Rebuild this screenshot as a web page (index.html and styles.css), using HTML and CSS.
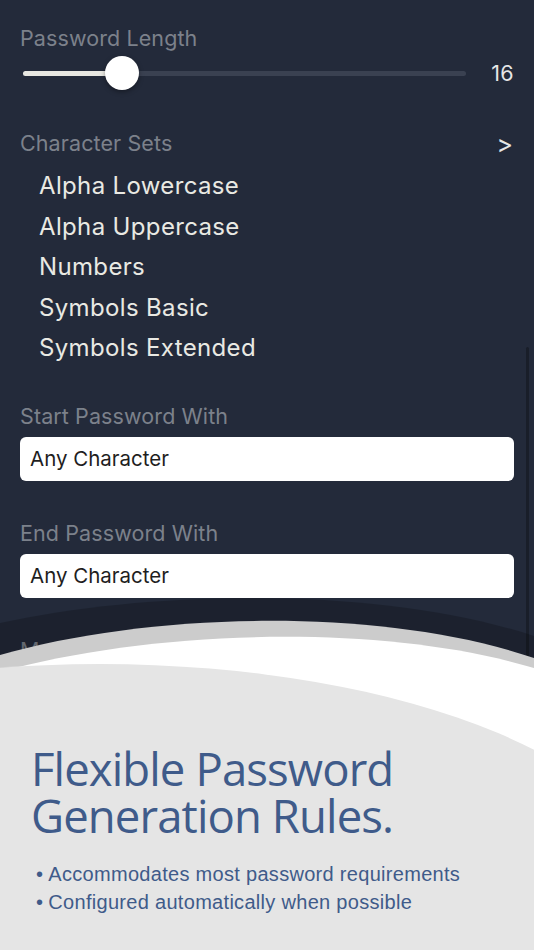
FILE: index.html
```html
<!DOCTYPE html>
<html lang="en">
<head>
<meta charset="utf-8">
<title>Password Rules</title>
<link rel="stylesheet" href="styles.css">
</head>
<body>
<div class="screen">
  <div class="app">
    <div class="label">Password Length</div>
    <div class="slider-row">
      <div class="track">
        <div class="fill" style="width:22.4%"></div>
        <div class="thumb" style="left:22.4%"></div>
      </div>
      <div class="value">16</div>
    </div>

    <div class="label-row">
      <div class="label">Character Sets</div>
      <div class="chev">&gt;</div>
    </div>
    <ul class="sets">
      <li>Alpha Lowercase</li>
      <li>Alpha Uppercase</li>
      <li>Numbers</li>
      <li>Symbols Basic</li>
      <li>Symbols Extended</li>
    </ul>

    <div class="label section-first">Start Password With</div>
    <div class="field">Any Character</div>

    <div class="label section">End Password With</div>
    <div class="field">Any Character</div>

    <div class="label section">Must Contain</div>
  </div>
  <div class="scrollbar"></div>

  <div class="promo">
    <svg class="waves" viewBox="0 590 534 360" preserveAspectRatio="none" aria-hidden="true">
      <path d="M0,623 C150,590 380,585 534,636 L534,950 L0,950 Z" fill="rgba(0,0,0,0.2)"/>
      <path d="M0,655 C150,612 380,606 534,658 L534,950 L0,950 Z" fill="#cccccc"/>
      <path d="M0,672 C150,630 380,622 534,668 L534,950 L0,950 Z" fill="#ffffff"/>
      <ellipse cx="100" cy="900" rx="563" ry="236" fill="#e5e5e5"/>
    </svg>
    <div class="promo-text">
      <h1 class="headline"><span class="hl-line">Flexible Password</span><span class="hl-line">Generation Rules.</span></h1>
      <ul class="bullets">
        <li>Accommodates most password requirements</li>
        <li>Configured automatically when possible</li>
      </ul>
    </div>
  </div>
</div>
</body>
</html>
```

FILE: styles.css
```css
* { box-sizing: border-box; }

html, body {
  margin: 0;
  padding: 0;
}

body {
  background: #232a3a;
  font-family: Inter, "Noto Sans", sans-serif;
}

.screen {
  position: relative;
  width: 534px;
  height: 950px;
  overflow: hidden;
  background: #232a3a;
}

.app {
  padding: 25px 20px 0 20px;
}

.label {
  color: #7c818b;
  font-size: 21.5px;
  line-height: 26px;
  letter-spacing: 0.1px;
}

.slider-row {
  display: flex;
  align-items: center;
  height: 34px;
  margin-top: 5px;
}

.track {
  position: relative;
  flex: 1;
  height: 5px;
  margin-left: 3px;
  border-radius: 3px;
  background: #3a4151;
}

.fill {
  height: 100%;
  border-radius: 3px;
  background: #e7e7e1;
}

.thumb {
  position: absolute;
  top: 50%;
  width: 34px;
  height: 34px;
  margin: -17px 0 0 -17px;
  border-radius: 50%;
  background: #ffffff;
  box-shadow: 0 2px 5px rgba(0, 0, 0, 0.35);
}

.value {
  margin-left: 25px;
  color: #e6e6e6;
  font-size: 21.5px;
  letter-spacing: 0.3px;
}

.label-row {
  display: flex;
  justify-content: space-between;
  align-items: baseline;
  margin-top: 39px;
}

.chev {
  color: #e6e6e6;
  font-size: 25px;
  line-height: 26px;
  padding-right: 1px;
  position: relative;
  top: 2px;
}

.sets {
  list-style: none;
  margin: 10px 0 0 0;
  padding: 0 0 0 19px;
}

.sets li {
  color: #e9e9e3;
  font-size: 24px;
  line-height: 40.5px;
  letter-spacing: 0.35px;
}

.section-first {
  margin-top: 34.5px;
}

.section {
  margin-top: 39px;
}

.field {
  height: 44px;
  margin-top: 8px;
  padding-left: 10px;
  border-radius: 6px;
  background: #ffffff;
  color: #1e1e1e;
  font-size: 20.5px;
  line-height: 44px;
  letter-spacing: 0;
}

.scrollbar {
  position: absolute;
  top: 347px;
  right: 5px;
  width: 3px;
  height: 603px;
  border-radius: 2px;
  background: #191e29;
}

.promo {
  position: absolute;
  left: 0;
  top: 590px;
  width: 534px;
  height: 360px;
}

.waves {
  position: absolute;
  left: 0;
  top: 0;
  width: 534px;
  height: 360px;
  display: block;
}

.promo-text {
  position: relative;
  padding: 155px 0 0 31px;
}

.headline {
  margin: 0;
  color: #3f5b8a;
  font-family: "Open Sans", "Noto Sans", sans-serif;
  font-weight: 400;
  font-size: 45.5px;
  line-height: 47px;
  letter-spacing: -0.9px;
}

.hl-line {
  display: block;
  height: 47px;
}

.bullets {
  list-style: none;
  margin: 22px 0 0 0;
  padding: 0 0 0 5px;
}

.bullets li {
  color: #3f5b8a;
  font-family: "Liberation Sans", Arial, sans-serif;
  font-size: 20px;
  line-height: 27.5px;
  letter-spacing: 0.3px;
}

.bullets li::before {
  content: "\2022";
  margin-right: 5px;
}
```
